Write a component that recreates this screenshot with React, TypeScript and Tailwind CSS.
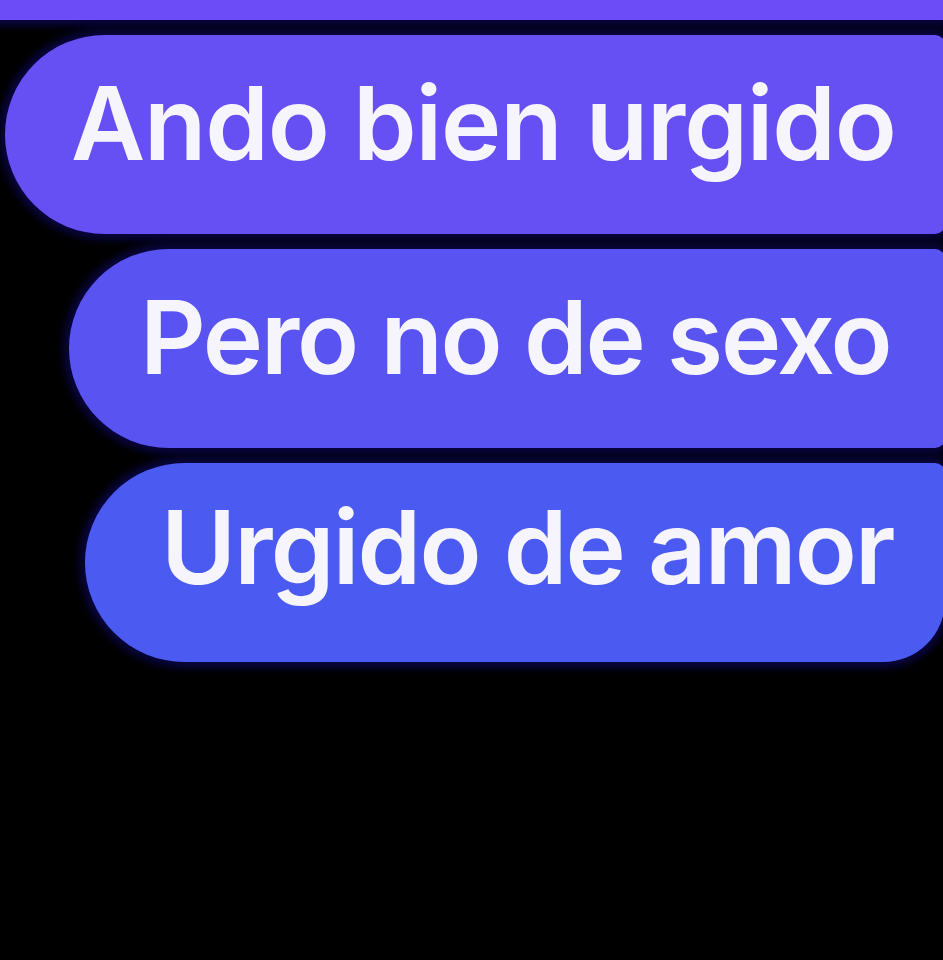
const messages = [
  { text: 'Ando bien urgido', ml: 'ml-[5px]', bg: 'bg-[#664ff3]', track: 'tracking-[-1.2px]', pb: 'pb-[23px]', pl: 'pl-[66px]', br: 'rounded-r-[10px]' },
  { text: 'Pero no de sexo', ml: 'ml-[69px]', bg: 'bg-[#5954f1]', track: 'tracking-[-2.2px]', pb: 'pb-[23px]', pl: 'pl-[71px]', br: 'rounded-r-[10px]' },
  { text: 'Urgido de amor', ml: 'ml-[85px]', bg: 'bg-[#4b5bf1]', track: 'tracking-[-1.8px]', pb: 'pb-[32px]', pl: 'pl-[76px]', br: 'rounded-tr-[10px] rounded-br-[62px]' },
];

export default function App() {
  return (
    <div className="w-[943px] h-[960px] bg-black overflow-hidden flex flex-col gap-[15px] font-['Inter',sans-serif]">
      <div className="h-[20px] -ml-[30px] mr-[-30px] shrink-0 bg-[#6b4cf6] rounded-b-[10px] shadow-[0_0_10px_5px_#0a0648]" />
      {messages.map((m) => (
        <div
          key={m.text}
          className={`h-[199px] shrink-0 mr-[-2px] rounded-l-[100px] ${m.br} ${m.ml} ${m.bg} ${m.pl} ${m.pb} flex items-center shadow-[0_0_10px_5px_#0a0648]`}
        >
          <span className={`text-[102px] font-semibold leading-none whitespace-nowrap text-[#f6f4fc] ${m.track}`}>{m.text}</span>
        </div>
      ))}
    </div>
  );
}
